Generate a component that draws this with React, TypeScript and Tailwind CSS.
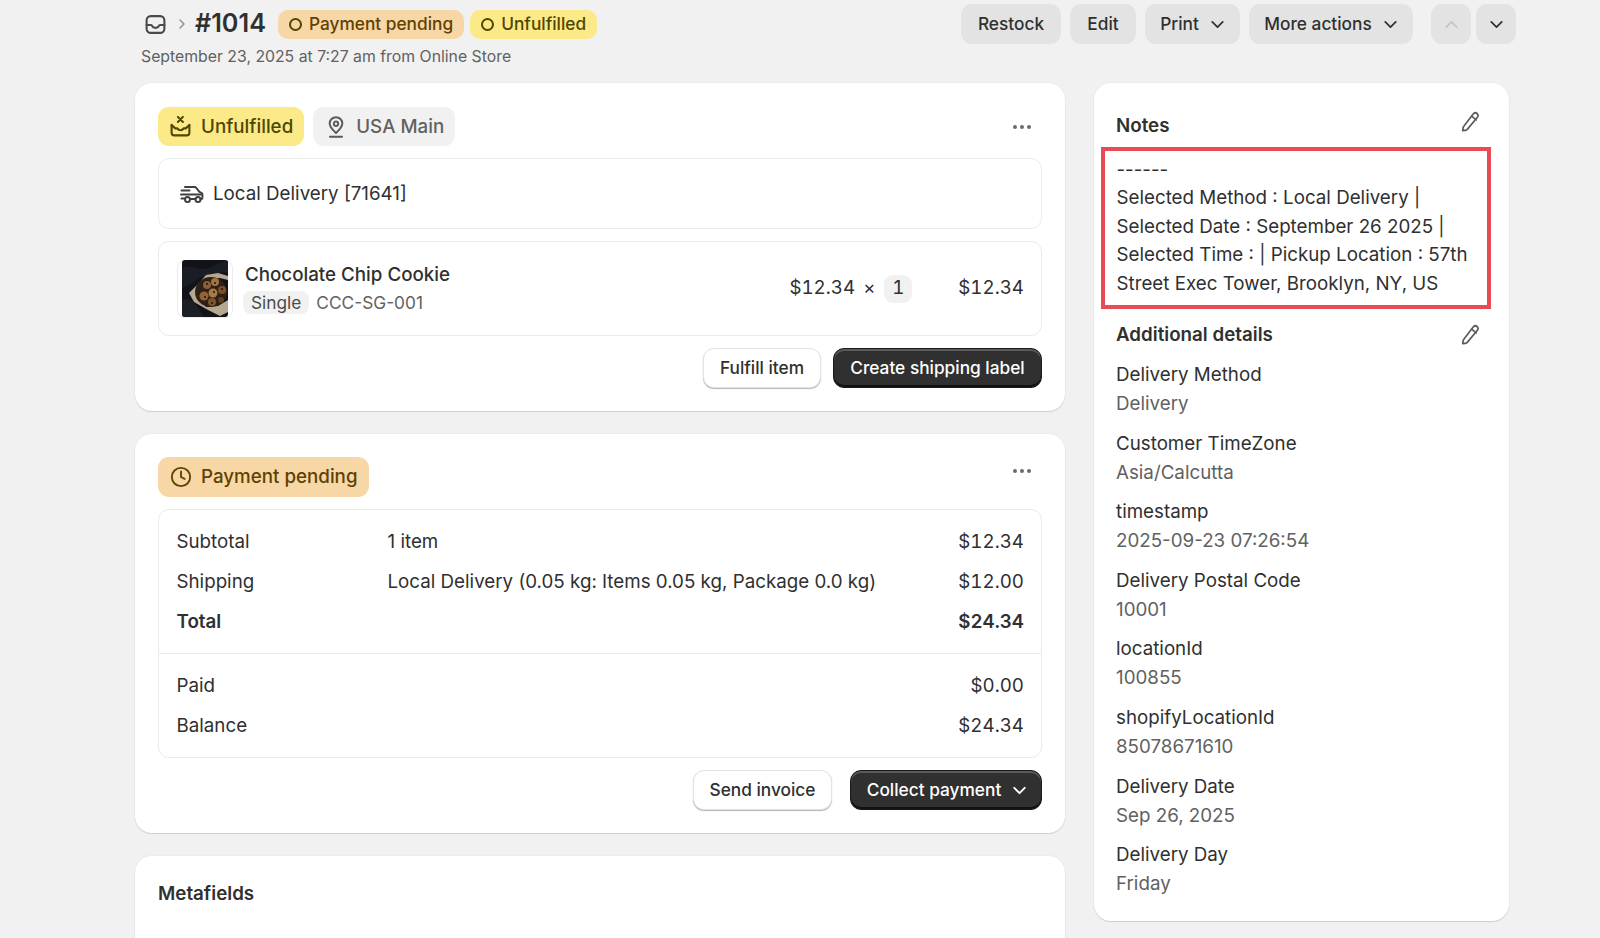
import React from "react";
import { ChevronDown, ChevronUp, ChevronRight, Clock, Ellipsis } from "lucide-react";

function Pencil() {
  return (
    <svg width="22" height="22" viewBox="0 0 22 22" fill="none" stroke="#5c5c5c" strokeWidth="1.7" strokeLinejoin="round" strokeLinecap="round">
      <path d="M14.6 2.6c1-1 2.6-.9 3.6.1s1.1 2.5.2 3.5L8.3 18.4c-.5.6-1.2.9-2 1l-2.6.3.4-2.8c.1-.7.4-1.3.9-1.8L14.6 2.6Z" />
      <path d="M12.6 5.2l4.6 3.7" />
    </svg>
  );
}

function InboxIcon() {
  return (
    <svg width="23" height="23" viewBox="0 0 22 22" fill="none" stroke="#4a4a4a" strokeWidth="2" strokeLinejoin="round" strokeLinecap="round">
      <rect x="2.5" y="3" width="17" height="16" rx="4" />
      <path d="M2.5 11.5h4.2c.6 0 1 .5 1.2 1 .3 1 1.4 1.7 3.1 1.7s2.8-.7 3.1-1.7c.2-.5.6-1 1.2-1h4.2" />
    </svg>
  );
}

function UnfulfilledIcon() {
  return (
    <svg width="23" height="23" viewBox="0 0 22 22" fill="none" stroke="#4f4700" strokeWidth="2" strokeLinejoin="round" strokeLinecap="round">
      <path d="M8.5 1.8l4.8 4.8M13.3 1.8L8.5 6.6" />
      <path d="M2.5 9.5V17c0 1.4 1 2.5 2.5 2.5h12c1.5 0 2.5-1.1 2.5-2.5V9.5" />
      <path d="M2.5 9.5l3.5 3.3h2c.8 1.300 1.700 1.800 3 1.800s2.200-.5 3-1.800h2l3.500-3.300" />
    </svg>
  );
}

function PinIcon() {
  return (
    <svg width="24" height="24" viewBox="0 0 22 22" fill="none" stroke="#5a5a5a" strokeWidth="1.8" strokeLinejoin="round" strokeLinecap="round">
      <path d="M11 16.5c-3-3-5.800-5.300-5.800-8.700a5.800 5.800 0 0 1 11.600 0c0 3.400-2.800 5.700-5.800 8.700Z" />
      <circle cx="11" cy="8" r="2" />
      <path d="M5.5 20h11" />
    </svg>
  );
}

function TruckIcon() {
  return (
    <svg width="24" height="20" viewBox="0 0 24 20" fill="none" stroke="#404040" strokeWidth="2" strokeLinejoin="round" strokeLinecap="round">
      <path d="M5 3h9.5c.8 0 1.400.3 1.900 1l2.800 3.700 2.300 1.300c.6.300.9.900.9 1.500V14c0 .6-.4 1-1 1h-1" />
      <path d="M1.5 6.5h8M1 10.5h20" />
      <path d="M1.5 14.5h2.500M11 15h4.500" />
      <circle cx="7.5" cy="15.5" r="2.5" />
      <circle cx="18" cy="15.5" r="2.5" />
    </svg>
  );
}

function Ring() {
  return <span className="block h-[13px] w-[13px] rounded-full border-2 border-[#4f4700]" />;
}

function Cookie() {
  return (
    <svg width="46" height="57" viewBox="0 0 46 57" className="rounded-[3px]">
      <rect width="46" height="57" fill="#12131a" />
      <path d="M0 8 C12 3 20 14 32 5 L46 0 V12 C34 14 24 12 12 22 L0 28Z" fill="#1b1d26" />
      <path d="M0 40 C8 36 14 44 22 57 H0Z" fill="#1d1f28" />
      <path d="M7 33 L16 24 L24 15 L36 13 L46 16 V20 L38 18 L26 20 L14 34 L24 47 L36 46 L46 40 V52 L38 56 L26 50 L12 42Z" fill="#b5a88f" />
      <ellipse cx="29" cy="32" rx="16" ry="15" fill="#2f2016" />
      <circle cx="25" cy="25" r="4" fill="#8c5f36" />
      <circle cx="33" cy="22" r="4" fill="#a3743f" />
      <circle cx="40" cy="30" r="4" fill="#7a4f2b" />
      <circle cx="22" cy="36" r="4.5" fill="#936438" />
      <circle cx="31" cy="33" r="4.5" fill="#a87a47" />
      <circle cx="30" cy="42" r="4" fill="#7e532d" />
      <circle cx="39" cy="40" r="3" fill="#5f3d22" />
      <circle cx="25" cy="24" r="1" fill="#1f140c" />
      <circle cx="33" cy="23" r="1" fill="#1f140c" />
      <circle cx="23" cy="37" r="1" fill="#1f140c" />
      <circle cx="32" cy="32" r="1" fill="#1f140c" />
      <circle cx="30" cy="43" r="1" fill="#1f140c" />
      <circle cx="40" cy="29" r="1" fill="#1f140c" />
    </svg>
  );
}

const greyBtn = "flex h-[40px] items-center justify-center rounded-[11px] bg-[#e3e3e3] text-[17.3px] font-medium text-[#303030]";
const whiteBtn = "flex h-[40px] items-center justify-center rounded-[11px] border border-[#e3e3e3] bg-white text-[17.3px] font-medium text-[#303030] shadow-[0_1px_1px_#b5b5b5]";
const darkBtn = "flex h-[40px] items-center justify-center rounded-[11px] border border-[#1a1a1a] bg-[#303030] text-[17.3px] font-medium text-white shadow-[inset_0_2px_0_#5a5a5a,inset_0_-2px_0_#111]";
const card = "rounded-[17px] bg-white shadow-[0_1px_1px_#cfcfcf,0_0_0_1px_#ececec]";
const box = "rounded-[11px] border border-[#ebebeb] bg-white";

function Row({ a, b, c, bold }: { a: string; b?: string; c: string; bold?: boolean }) {
  return (
    <div className={`flex h-[39.8px] items-center ${bold ? "font-semibold" : ""}`}>
      <span className="w-[211px] shrink-0">{a}</span>
      <span className="flex-1">{b}</span>
      <span className="tabular-nums">{c}</span>
    </div>
  );
}

function Detail({ k, v }: { k: string; v: string }) {
  return (
    <div className="flex h-[68.6px] flex-col">
      <span className="h-[29px] leading-[29px] text-[#303030]">{k}</span>
      <span className="h-[29px] leading-[29px] text-[#616161]">{v}</span>
    </div>
  );
}

export default function App() {
  return (
    <div className="flex h-[938px] w-[1600px] flex-col overflow-hidden bg-[#f1f1f1] font-['Inter',sans-serif] text-[18.75px] text-[#303030]">
      <header className="flex h-[83px] shrink-0 items-start justify-between pl-[141px] pr-[84px] pt-[4px]">
        <div className="flex flex-col">
          <div className="flex h-[40px] items-center">
            <span className="ml-[3px]"><InboxIcon /></span>
            <ChevronRight size={16} color="#8a8a8a" className="ml-[7px]" />
            <span className="ml-[5px] text-[25.2px] font-semibold text-[#303030]">#1014</span>
            <span className="ml-[12px] flex h-[29px] items-center gap-[7px] rounded-[10px] bg-[#f8d7a6] px-[11px] text-[17.3px] font-medium text-[#5e4200]"><Ring />Payment pending</span>
            <span className="ml-[6px] flex h-[29px] items-center gap-[7px] rounded-[10px] bg-[#fbea87] px-[11px] text-[17.3px] font-medium text-[#4f4700]"><Ring />Unfulfilled</span>
          </div>
          <div className="mt-[1px] text-[15.8px] leading-[24px] text-[#616161]">September 23, 2025 at 7:27 am from Online Store</div>
        </div>
        <div className="flex gap-[9px]">
          <button className={`${greyBtn} w-[100px]`}>Restock</button>
          <button className={`${greyBtn} w-[66px]`}>Edit</button>
          <button className={`${greyBtn} w-[95px] gap-[8px] pl-[3px]`}>Print<ChevronDown size={21} strokeWidth={2} /></button>
          <button className={`${greyBtn} w-[164px] gap-[8px] pl-[3px]`}>More actions<ChevronDown size={21} strokeWidth={2} /></button>
          <button className={`${greyBtn} ml-[9px] w-[40px]`}><ChevronUp size={21} strokeWidth={2} color="#c4c4c4" /></button>
          <button className={`${greyBtn} -ml-[4px] w-[40px]`}><ChevronDown size={21} strokeWidth={2} /></button>
        </div>
      </header>

      <main className="flex gap-[29px] pl-[135px]">
        <div className="flex w-[930px] shrink-0 flex-col gap-[23px]">
          <section className={`${card} h-[328px] px-[23px] pt-[24px]`}>
            <div className="flex items-center">
              <span className="flex h-[39px] items-center gap-[9px] rounded-[11px] bg-[#fbea87] px-[11px] font-medium text-[#4f4700]"><UnfulfilledIcon /><span className="pt-[2px]">Unfulfilled</span></span>
              <span className="ml-[9px] flex h-[39px] items-center gap-[8px] rounded-[11px] bg-[#f1f1f1] px-[11px] font-medium text-[#616161]"><PinIcon /><span className="pt-[2px]">USA Main</span></span>
              <Ellipsis size={24} color="#6b6b6b" className="ml-auto mr-[8px]" />
            </div>
            <div className={`${box} mt-[12px] flex h-[71px] items-center gap-[9px] pl-[21px]`}>
              <TruckIcon />
              <span className="pt-[2px]">Local Delivery [71641]</span>
            </div>
            <div className={`${box} mt-[12px] flex h-[95px] items-center pl-[18px] pr-[17px]`}>
              <div className="flex h-[58px] w-[56px] items-center justify-center rounded-[8px] border border-[#ebebeb]"><Cookie /></div>
              <div className="ml-[10px] flex flex-col">
                <span className="h-[28px] pl-[2px] font-medium leading-[28px]">Chocolate Chip Cookie</span>
                <div className="flex h-[28px] items-center gap-[7px] text-[17.3px]">
                  <span className="flex h-[23px] items-center rounded-[8px] bg-[#f1f1f1] px-[8px] text-[#4a4a4a]">Single</span>
                  <span className="text-[#616161]">CCC-SG-001</span>
                </div>
              </div>
              <div className="ml-auto flex items-center tabular-nums">
                <span>$12.34</span>
                <span className="ml-[8px]">×</span>
                <span className="ml-[9px] flex h-[28px] w-[28px] items-center justify-center rounded-[9px] bg-[#f1f1f1]">1</span>
                <span className="ml-[46px]">$12.34</span>
              </div>
            </div>
            <div className="mt-[12px] flex justify-end gap-[12px]">
              <button className={`${whiteBtn} w-[118px]`}>Fulfill item</button>
              <button className={`${darkBtn} w-[209px]`}>Create shipping label</button>
            </div>
          </section>

          <section className={`${card} h-[399px] px-[23px] pt-[23px]`}>
            <div className="flex items-start">
              <span className="flex h-[40px] items-center gap-[9px] rounded-[11px] bg-[#f8d7a6] px-[11px] font-medium text-[#5e4200]"><Clock size={22} strokeWidth={2} color="#5e4200" className="ml-[1px]" /><span className="pt-[1px]">Payment pending</span></span>
              <Ellipsis size={24} color="#6b6b6b" className="ml-auto mr-[8px] mt-[2px]" />
            </div>
            <div className={`${box} mt-[12px] h-[249px] pl-[17.5px] pr-[17px]`}>
              <div className="pt-[12.5px]">
                <Row a="Subtotal" b="1 item" c="$12.34" />
                <Row a="Shipping" b="Local Delivery (0.05 kg: Items 0.05 kg, Package 0.0 kg)" c="$12.00" />
                <Row a="Total" c="$24.34" bold />
              </div>
              <div className="-ml-[17.5px] -mr-[17px] mt-[11.5px] border-t border-[#ebebeb]" />
              <div className="pt-[12px]">
                <Row a="Paid" c="$0.00" />
                <Row a="Balance" c="$24.34" />
              </div>
            </div>
            <div className="mt-[12px] flex justify-end gap-[18px]">
              <button className={`${whiteBtn} w-[139px]`}>Send invoice</button>
              <button className={`${darkBtn} w-[192px] gap-[8px] pl-[5px]`}>Collect payment<ChevronDown size={21} strokeWidth={2.2} /></button>
            </div>
          </section>

          <section className={`${card} h-[200px] px-[23px] pt-[24px]`}>
            <h2 className="font-semibold">Metafields</h2>
          </section>
        </div>

        <aside className={`${card} h-[838px] w-[415px] shrink-0 px-[22px] pt-[28px]`}>
          <div className="flex h-[30px] items-center justify-between">
            <h2 className="font-semibold">Notes</h2>
            <span className="-mt-[8px] mr-[6px]"><Pencil /></span>
          </div>
          <div className="-ml-[15px] mt-[6px] h-[162px] w-[390px] border-[4px] border-[#ea4a55] pl-[11.5px] pr-[6px] pt-[4.5px] leading-[28.65px]">
            <div>------</div>
            <div>Selected Method : Local Delivery |</div>
            <div>Selected Date : September 26 2025 |</div>
            <div>Selected Time : | Pickup Location : 57th</div>
            <div>Street Exec Tower, Brooklyn, NY, US</div>
          </div>
          <div className="mt-[11px] flex h-[30px] items-center justify-between">
            <h2 className="font-semibold">Additional details</h2>
            <span className="mr-[6px]"><Pencil /></span>
          </div>
          <div className="mt-[10px] flex flex-col">
            <Detail k="Delivery Method" v="Delivery" />
            <Detail k="Customer TimeZone" v="Asia/Calcutta" />
            <Detail k="timestamp" v="2025-09-23 07:26:54" />
            <Detail k="Delivery Postal Code" v="10001" />
            <Detail k="locationId" v="100855" />
            <Detail k="shopifyLocationId" v="85078671610" />
            <Detail k="Delivery Date" v="Sep 26, 2025" />
            <Detail k="Delivery Day" v="Friday" />
          </div>
        </aside>
      </main>
    </div>
  );
}
